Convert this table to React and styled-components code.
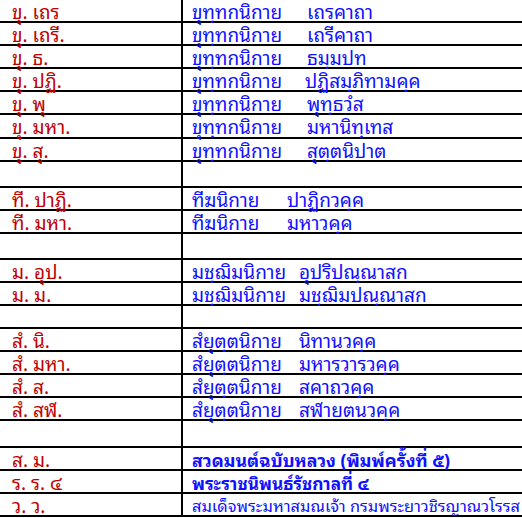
import React from "react";
import styled, { createGlobalStyle } from "styled-components";

const GlobalStyle = createGlobalStyle`
  html, body { margin:0; padding:0; background:#fff; }
  body { width:522px; height:518px; overflow:hidden; }
`;

export const Table = styled.table`
  border-collapse:collapse;
  margin:-2px 0 0 -2px;
  width:540px;
  font-family: Tahoma, "Noto Sans Thai Looped", Loma, Garuda, "Noto Sans Thai", "DejaVu Sans", sans-serif;
  font-size:19px;
`;
export const Row = styled.tr`
  height:${p => p.$h || 23}px;
`;
export const Abbr = styled.td`
  width:169px;
  padding:0 0 0 14px;
  border:2px solid #000;
  border-left:none;
  color:#c00000;
  white-space:nowrap;
  line-height:20px;
`;
export const Title = styled.td`
  padding:0 0 0 9px;
  border:2px solid #000;
  border-right:none;
  color:#1010ff;
  white-space:nowrap;
  line-height:20px;
  font-weight:${p => (p.$bold ? 700 : 400)};
  font-size:${p => p.$size || 19}px;
`;
export const Nikaya = styled.span`
  display:inline-block;
  min-width:${p => p.$w}px;
`;

const rows = [
  ["ขุ. เถร", "ขุทฺทกนิกาย", "เถรคาถา", 115],
  ["ขุ. เถรี.", "ขุทฺทกนิกาย", "เถรีคาถา", 115],
  ["ขุ. ธ.", "ขุทฺทกนิกาย", "ธมฺมปท", 115],
  ["ขุ. ปฏิ.", "ขุทฺทกนิกาย", "ปฏิสมฺภิทามคฺค", 113],
  ["ขุ. พุ", "ขุทฺทกนิกาย", "พุทฺธวํส", 115],
  ["ขุ. มหา.", "ขุทฺทกนิกาย", "มหานิทฺเทส", 115],
  ["ขุ. สุ.", "ขุทฺทกนิกาย", "สุตฺตนิปาต", 115],
  null,
  ["ที. ปาฏิ.", "ทีฆนิกาย", "ปาฏิกวคฺค", 95],
  ["ที. มหา.", "ทีฆนิกาย", "มหาวคฺค", 95],
  null,
  ["ม. อุป.", "มชฺฌิมนิกาย", "อุปริปณฺณาสก", 107],
  ["ม. ม.", "มชฺฌิมนิกาย", "มชฺฌิมปณฺณาสก", 107],
  null,
  ["สํ. นิ.", "สํยุตฺตนิกาย", "นิทานวคฺค", 107],
  ["สํ. มหา.", "สํยุตฺตนิกาย", "มหารวารวคฺค", 107],
  ["สํ. ส.", "สํยุตฺตนิกาย", "สคาถวคฺค", 107],
  ["สํ. สฬ.", "สํยุตฺตนิกาย", "สฬายตนวคฺค", 107],
  null,
];

const gapHeights = [26, 26, 23, 27];

export default function App() {
  let gap = 0;
  return (
    <>
      <GlobalStyle />
      <Table>
        <tbody>
          {rows.map((r, i) =>
            r ? (
              <Row key={i} $h={i === 5 ? 24 : 23}>
                <Abbr>{r[0]}</Abbr>
                <Title>
                  <Nikaya $w={r[3]}>{r[1]}</Nikaya>
                  {r[2]}
                </Title>
              </Row>
            ) : (
              <Row key={i} $h={gapHeights[gap++]}>
                <Abbr />
                <Title />
              </Row>
            )
          )}
          <Row>
            <Abbr>ส. ม.</Abbr>
            <Title $bold $size={17.8}>สวดมนต์ฉบับหลวง (พิมพ์ครั้งที่ ๕)</Title>
          </Row>
          <Row>
            <Abbr>ร. ร. ๔</Abbr>
            <Title $bold $size={17.3}>พระราชนิพนธ์รัชกาลที่ ๔</Title>
          </Row>
          <Row>
            <Abbr>ว. ว.</Abbr>
            <Title $size={16.4}>สมเด็จพระมหาสมณเจ้า กรมพระยาวชิรญาณวโรรส</Title>
          </Row>
        </tbody>
      </Table>
    </>
  );
}
